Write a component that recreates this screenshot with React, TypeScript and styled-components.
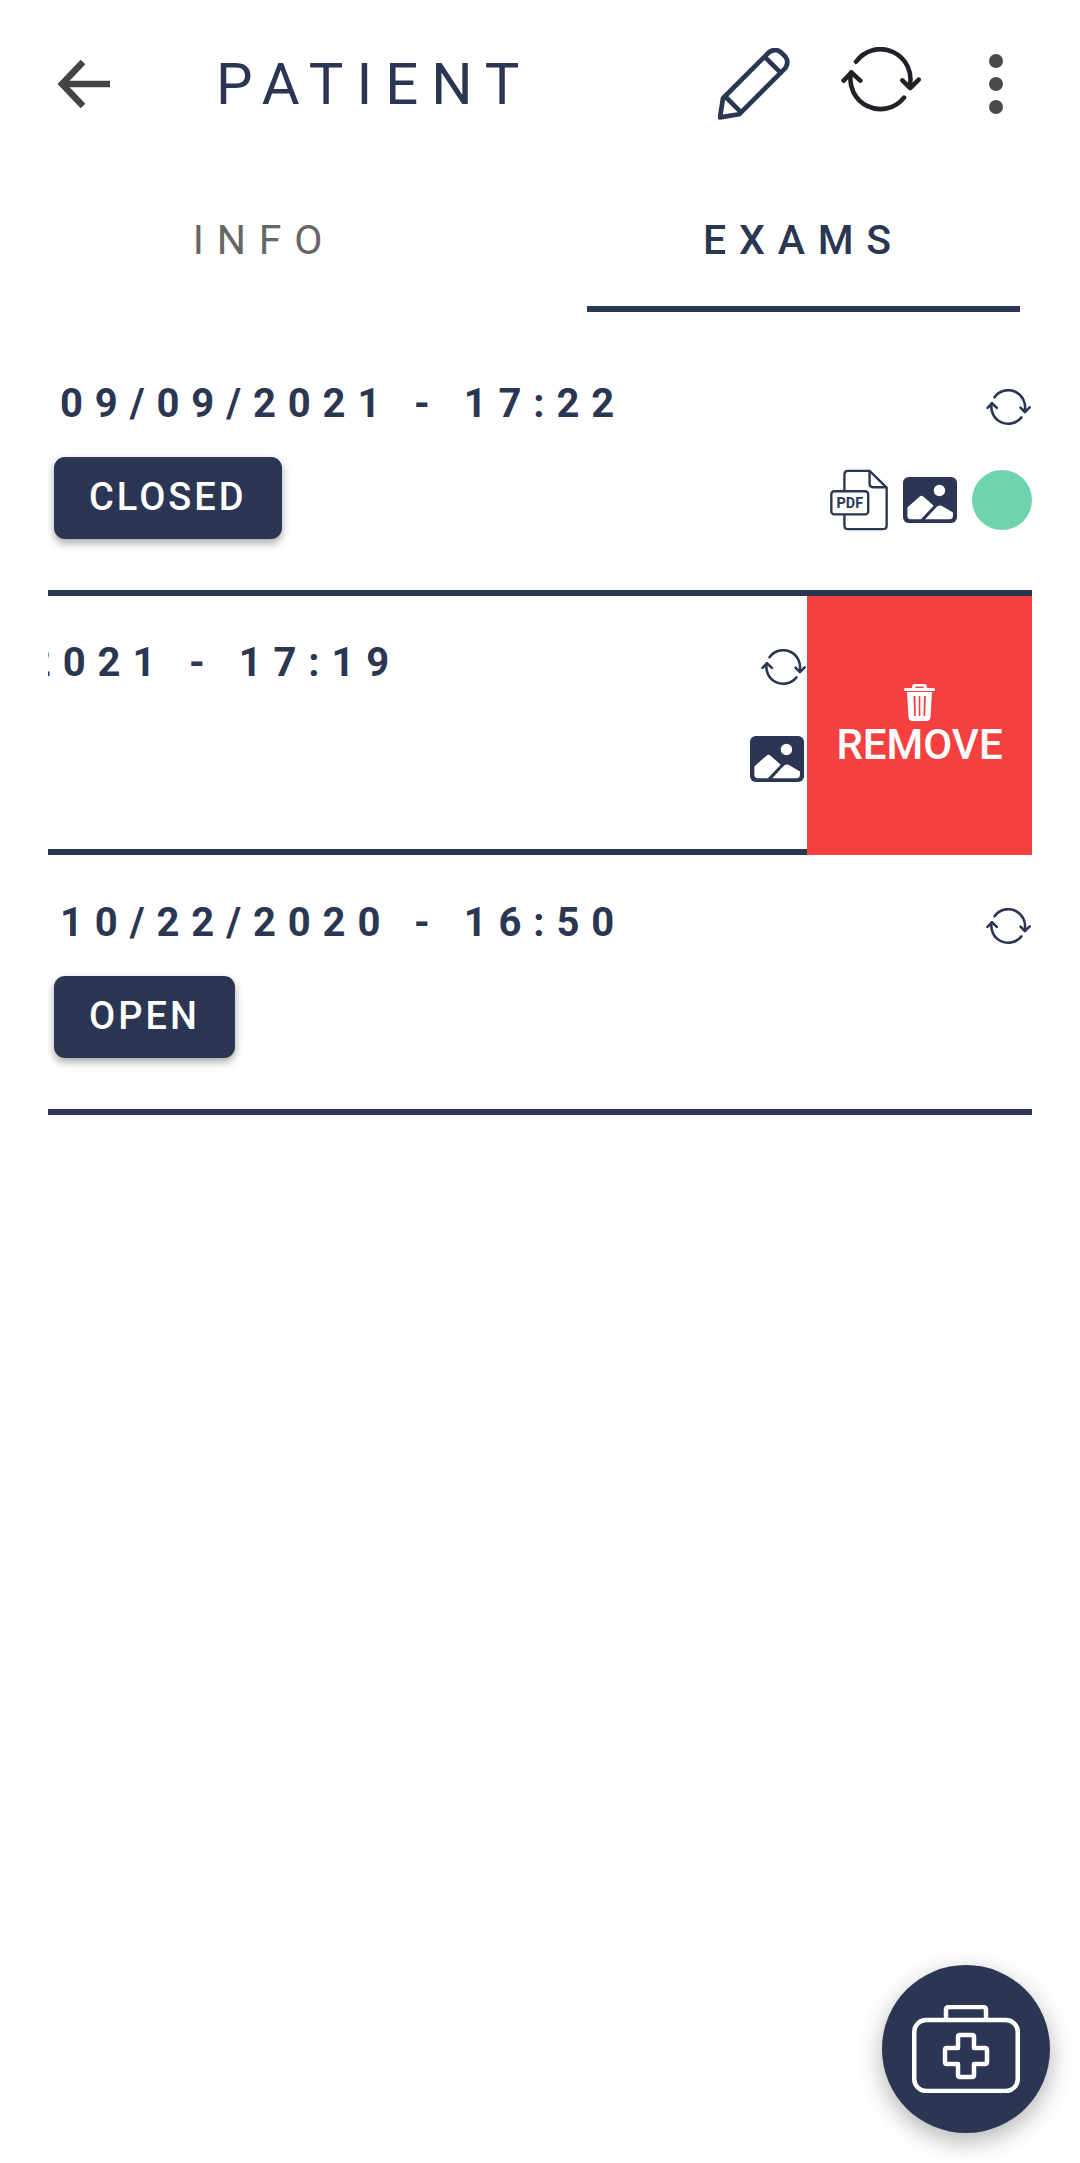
import React from "react";
import styled, { createGlobalStyle } from "styled-components";

const navy = "#2b3652";

const GlobalStyle = createGlobalStyle`
  * { box-sizing: border-box; }
  html, body { margin: 0; padding: 0; background: #ffffff; }
  body { font-family: Roboto, "Liberation Sans", sans-serif; }
`;

const Page = styled.div`
  position: relative;
  width: 1080px;
  min-height: 2163px;
  overflow: hidden;
  background: #ffffff;
`;

const Header = styled.header`
  display: flex;
  align-items: center;
  height: 168px;
  padding-left: 57px;
`;

const BackButton = styled.button`
  display: flex;
  width: 53px;
  height: 48px;
  padding: 0;
  border: 0;
  background: none;
`;

const Title = styled.h1`
  flex: 1;
  margin: 0 0 0 106px;
  font-size: 58px;
  font-weight: 400;
  letter-spacing: 13px;
  color: ${navy};
  line-height: 1;
`;

const HeaderActions = styled.div`
  display: flex;
  align-items: center;
  margin-right: 77px;
`;

const IconButton = styled.span<{ $gap?: number; $lift?: number }>`
  display: flex;
  margin-left: ${(p) => p.$gap ?? 0}px;
  margin-bottom: ${(p) => p.$lift ?? 0}px;
`;

const Tabs = styled.nav`
  display: flex;
  justify-content: space-between;
  height: 144px;
  padding: 0 60px 0 44px;
`;

const Tab = styled.div<{ $active?: boolean }>`
  display: flex;
  align-items: center;
  justify-content: center;
  width: 433px;
  height: 144px;
  padding-top: 6px;
  padding-left: ${(p) => (p.$active ? 0 : 7)}px;
  font-size: 41px;
  font-weight: ${(p) => (p.$active ? 500 : 400)};
  letter-spacing: 12.8px;
  color: ${(p) => (p.$active ? navy : "#666666")};
  border-bottom: 6px solid ${(p) => (p.$active ? navy : "transparent")};
`;

const ExamList = styled.section`
  display: flex;
  flex-direction: column;
  margin: 24.4px 48px 0;
`;

const ExamRow = styled.article`
  position: relative;
  height: 259.5px;
  overflow: hidden;
`;

const ExamBody = styled.div<{ $offset?: number }>`
  display: flex;
  flex-direction: column;
  height: 100%;
  padding: 42.6px 0 0 6px;
  border-bottom: 6px solid ${navy};
  transform: translateX(${(p) => -(p.$offset ?? 0)}px);
`;

const DateLine = styled.div`
  display: flex;
  align-items: center;
  justify-content: space-between;
  height: 48px;
  padding-right: 1px;
`;

const DateText = styled.span`
  margin-left: 6px;
  padding-top: 1px;
  font-size: 40px;
  font-weight: 700;
  letter-spacing: 11.9px;
  white-space: pre;
  color: ${navy};
`;

const SyncSlot = styled.span`
  display: flex;
  margin-top: 10px;
`;

const StatusLine = styled.div`
  display: flex;
  align-items: center;
  justify-content: space-between;
  margin-top: 30px;
`;

const StatusBadge = styled.span`
  display: flex;
  align-items: center;
  height: 82px;
  padding: 0 35px 2px 35px;
  border-radius: 11px;
  background: ${navy};
  color: #ffffff;
  font-size: 38px;
  font-weight: 500;
  letter-spacing: 3px;
  box-shadow: 0 4px 8px rgba(0, 0, 0, 0.35);
`;

const BadgeSpacer = styled.span`
  height: 82px;
`;

const Attachments = styled.div<{ $inset?: number }>`
  display: flex;
  align-items: center;
  gap: 15px;
  margin-top: 4px;
  margin-right: ${(p) => p.$inset ?? 0}px;
`;

const StatusDot = styled.span`
  width: 60px;
  height: 60px;
  border-radius: 50%;
  background: #6fd4ae;
`;

const RemoveAction = styled.button`
  position: absolute;
  top: 0;
  right: 0;
  bottom: 0;
  display: flex;
  flex-direction: column;
  align-items: center;
  justify-content: center;
  width: 225px;
  padding: 2px 0 0;
  border: 0;
  background: #f54040;
  color: #ffffff;
  font-family: inherit;
  font-size: 42px;
  font-weight: 500;
  line-height: 48px;
`;

const AddButton = styled.button`
  position: absolute;
  right: 30px;
  bottom: 30px;
  display: flex;
  align-items: center;
  justify-content: center;
  width: 168px;
  height: 168px;
  padding: 0;
  border: 0;
  border-radius: 50%;
  background: ${navy};
  box-shadow: 0 8px 24px rgba(0, 0, 0, 0.3);
`;

const BackIcon = () => (
  <svg width="53" height="48" viewBox="0 0 53 48" fill="none" stroke="#444444" strokeWidth="6.500">
    <path d="M53 24H6" />
    <path d="M26 2 5 24l21 22" />
  </svg>
);

const PencilIcon = () => (
  <svg width="72" height="72" viewBox="115 85 215 215" fill="none" stroke={navy} strokeWidth="14" strokeLinejoin="round">
    <path d="M130 235 268 97q18-12 34 0l14 14q12 16 0 34L178 283l-57 9z" />
    <path d="M255 112l46 46" />
    <path d="M136 229l48 48" />
  </svg>
);

const SyncIcon = ({ width, height, color }: { width: number; height: number; color: string }) => (
  <svg width={width} height={height} viewBox="480 72 245 202" fill="none" stroke={color} strokeWidth="14" strokeLinecap="round" strokeLinejoin="round">
    <path d="M526 117A92 92 0 0 1 690 193" />
    <path d="M668 174l24 24 26-26" />
    <path d="M511 150A92 92 0 0 0 673 227" />
    <path d="M488 175l24-25 27 25" />
  </svg>
);

const DotsIcon = () => (
  <svg width="14" height="60" viewBox="0 0 14 60" fill="#4a4a4a">
    <circle cx="7" cy="7" r="7" />
    <circle cx="7" cy="30" r="7" />
    <circle cx="7" cy="53" r="7" />
  </svg>
);

const PdfIcon = () => (
  <svg width="58" height="62" viewBox="147 299 173 182" fill="none" stroke={navy} strokeWidth="7" strokeLinejoin="round">
    <path d="M190 364V314q0-11 11-11h64l51 50v112q0 12-12 12H202q-12 0-12-12v-31" />
    <path d="M265 303v38q0 11 11 11h40" />
    <rect x="151" y="364" width="110" height="69" rx="9" fill="#ffffff" />
    <text x="206" y="414" textAnchor="middle" fontFamily="Roboto, sans-serif" fontWeight="700" fontSize="43" fill={navy} stroke="none">PDF</text>
  </svg>
);

const ImageIcon = () => (
  <svg width="54" height="46" viewBox="370 322 160 136">
    <rect x="370" y="322" width="160" height="136" rx="17" fill={navy} />
    <circle cx="478" cy="362" r="17" fill="#ffffff" />
    <path d="M383 414q0-3 3-5l33-29q6-5 12 0l30 27-38 40H393q-10 0-10-10z" fill="#ffffff" />
    <path d="M436 447 468 412q5-6 12-6 3 0 8 3l30 18V437q0 10-10 10z" fill="#ffffff" />
  </svg>
);

const TrashIcon = () => (
  <svg width="31" height="37" viewBox="0 0 31 37" fill="#ffffff">
    <path fillRule="evenodd" d="M11 0h9q3 0 3 3v1h7q1 0 1 1.500T30 7H1Q0 7 0 5.500T1 4h7V3q0-3 3-3zm.500 2.500V4h8V2.500z" />
    <path fillRule="evenodd" d="M3 8h25l-1.500 25q-.3 4-4 4H8.500q-3.700 0-4-4zm6.500 4 .7 20h1.700l-.5-20zm5.200 0v20h1.600V12zm5.300 0-.5 20h1.700l.7-20z" />
  </svg>
);

const KitIcon = () => (
  <svg width="108" height="88" viewBox="0 0 108 88" fill="none" stroke="#ffffff" strokeWidth="4.500" strokeLinejoin="round">
    <path d="M34 15V5q0-3 3-3h34q3 0 3 3v10" />
    <rect x="2.250" y="15" width="103.500" height="71" rx="12" />
    <path d="M46 32q0-2 2-2h12q2 0 2 2v11h11q2 0 2 2v12q0 2-2 2H62v11q0 2-2 2H48q-2 0-2-2V59H35q-2 0-2-2V45q0-2 2-2h11z" />
  </svg>
);

type Exam = {
  date: string;
  status?: string;
  pdf?: boolean;
  image?: boolean;
  synced?: boolean;
  offset?: number;
  inset?: number;
};

const exams: Exam[] = [
  { date: "09/09/2021 - 17:22", status: "CLOSED", pdf: true, image: true, synced: true },
  { date: "09/08/2021 - 17:19", image: true, offset: 225, inset: 3 },
  { date: "10/22/2020 - 16:50", status: "OPEN" },
];

export default function App() {
  return (
    <Page>
      <GlobalStyle />
      <Header>
        <BackButton aria-label="Back">
          <BackIcon />
        </BackButton>
        <Title>PATIENT</Title>
        <HeaderActions>
          <IconButton>
            <PencilIcon />
          </IconButton>
          <IconButton $gap={51} $lift={8}>
            <SyncIcon width={80} height={66} color="#1f2226" />
          </IconButton>
          <IconButton $gap={68}>
            <DotsIcon />
          </IconButton>
        </HeaderActions>
      </Header>
      <Tabs>
        <Tab>INFO</Tab>
        <Tab $active>EXAMS</Tab>
      </Tabs>
      <ExamList>
        {exams.map((exam) => (
          <ExamRow key={exam.date}>
            <ExamBody $offset={exam.offset}>
              <DateLine>
                <DateText>{exam.date}</DateText>
                <SyncSlot>
                  <SyncIcon width={45} height={37} color={navy} />
                </SyncSlot>
              </DateLine>
              <StatusLine>
                {exam.status ? <StatusBadge>{exam.status}</StatusBadge> : <BadgeSpacer />}
                <Attachments $inset={exam.inset}>
                  {exam.pdf && <PdfIcon />}
                  {exam.image && <ImageIcon />}
                  {exam.synced && <StatusDot />}
                </Attachments>
              </StatusLine>
            </ExamBody>
            {exam.offset ? (
              <RemoveAction>
                <TrashIcon />
                REMOVE
              </RemoveAction>
            ) : null}
          </ExamRow>
        ))}
      </ExamList>
      <AddButton aria-label="Add exam">
        <KitIcon />
      </AddButton>
    </Page>
  );
}
